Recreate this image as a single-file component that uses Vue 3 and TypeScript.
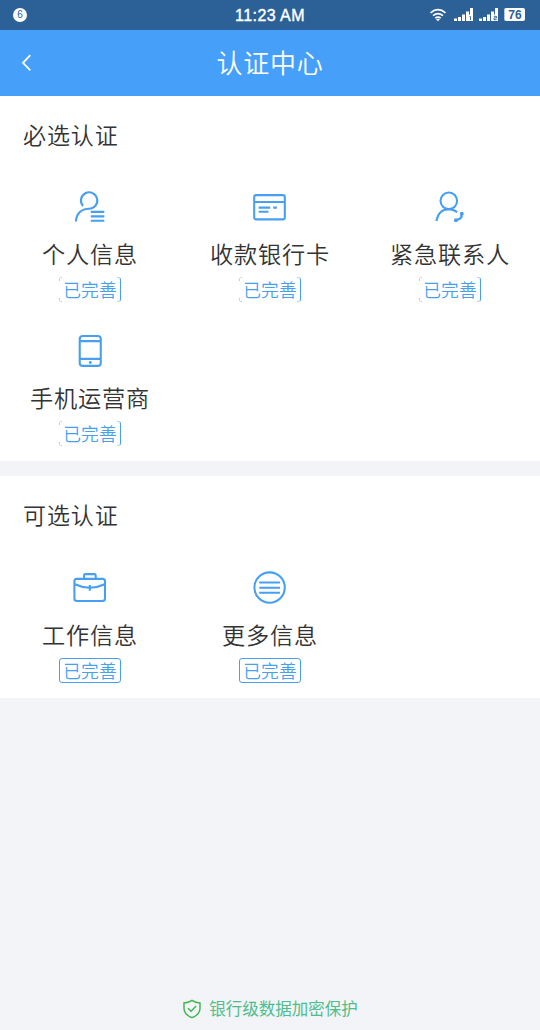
<script setup lang="ts">

interface Item {
  id: number
  icon: string
  name: string
  status: string
}

const required_items: Item[] = [
  {id: 0, icon: 'person', name: '个人信息', status: '已完善'},
  {id: 1, icon: 'card', name: '收款银行卡', status: '已完善'},
  {id: 2, icon: 'contact', name: '紧急联系人', status: '已完善'},
  {id: 3, icon: 'phone', name: '手机运营商', status: '已完善'},
]

const optional_items: Item[] = [
  {id: 4, icon: 'work', name: '工作信息', status: '已完善'},
  {id: 5, icon: 'more', name: '更多信息', status: '已完善'},
]

const sections = [
  {id: 'required', title: '必选认证', items: required_items},
  {id: 'optional', title: '可选认证', items: optional_items},
]

</script>

<template>
  <div class="page">
    <div class="status_bar">
      <div class="notice">6</div>
      <div class="time">11:23 AM</div>
      <div class="signals">
        <svg class="wifi" width="18" height="14" viewBox="0 0 18 14">
          <path d="M1.5 4.8Q9 -1.4 16.5 4.8M4 7.6Q9 3.5 14 7.6M6.3 10.2Q9 8 11.7 10.2" />
          <path class="solid" d="M9 13.2L7 11.3Q9 10 11 11.3Z" />
        </svg>
        <svg v-for="n in 2" :key="n" class="bars" width="19" height="13" viewBox="0 0 19 13">
          <path d="M0 10.5h3V13H0zM4 9h3v4H4zM8 6.5h3V13H8zM12 3.5h3V13h-3zM16 0h3v13h-3z" />
          <rect class="sim_back" x="13.5" y="6.5" width="5.5" height="6.5" />
          <path v-if="n == 1" class="sim" d="M15.5 8.5h1v3.5" />
          <path v-else class="sim" d="M14.8 8.3h2.7v1.6h-2.5v1.8h2.8" />
        </svg>
        <div class="battery">76</div>
      </div>
    </div>

    <div class="header">
      <svg class="back" width="12" height="18" viewBox="0 0 12 18">
        <path d="M10.3 1.2L3 8.8l7.3 7.6" />
      </svg>
      <h1>认证中心</h1>
    </div>

    <div v-for="section of sections" :key="section.id" class="section" :class="section.id">
      <h2>{{ section.title }}</h2>
      <div class="items">
        <div v-for="item of section.items" :key="item.id" class="item">
          <svg class="icon" width="36" height="36" viewBox="0 0 36 36">
            <template v-if="item.icon == 'person'">
              <path d="M10.9 17.2A8.3 8.3 0 1 1 17 20C9.2 20 4 25.3 3.8 33" />
              <path d="M18.8 23.2h13.7M18.8 27.7h13.7M18.8 32.2h13.7" />
            </template>
            <template v-else-if="item.icon == 'card'">
              <rect x="2" y="6.2" width="31" height="24.6" rx="2" />
              <path d="M2 13.2h31M6.5 18.9h11.7M21.3 18.9h3.7M6.5 23.1h10" />
            </template>
            <template v-else-if="item.icon == 'contact'">
              <circle cx="16.8" cy="12" r="8.4" />
              <path d="M4.2 32.4C5.7 24.4 10 20.5 16.6 20.5Q21.7 20.5 25.3 23.5" />
              <path class="handset" d="M29.7 25Q30.8 30.6 24 31.6" />
              <circle class="dot" cx="30" cy="25" r="2" />
              <circle class="dot" cx="24" cy="31.6" r="2" />
            </template>
            <template v-else-if="item.icon == 'phone'">
              <rect x="7.6" y="3" width="21.3" height="30.3" rx="3" />
              <path d="M7.6 8.2h21.3M7.6 26.2h21.3" />
              <circle class="dot" cx="18.3" cy="29.9" r="1.5" />
            </template>
            <template v-else-if="item.icon == 'work'">
              <rect x="2.2" y="9" width="31" height="22.4" rx="2.5" />
              <path d="M12 8.7V5.6Q12 4.2 13.4 4.2H22.4Q23.8 4.2 23.8 5.6V8.7" />
              <path d="M2.5 14.5Q18 21.5 33 14.5M17.8 15.3v5.6" />
            </template>
            <template v-else>
              <circle cx="17.6" cy="17.8" r="15.4" />
              <path d="M7.1 12.7h21M7.1 17.9h21M7.1 23.1h21" />
            </template>
          </svg>
          <div class="name">{{ item.name }}</div>
          <div class="badge">{{ item.status }}</div>
        </div>
      </div>
    </div>

    <div class="footer">
      <svg width="20" height="20" viewBox="0 0 20 20">
        <path d="M10 1.3Q13.5 3.7 18 4V9.5Q18 15.6 10 18.7Q2 15.6 2 9.5V4Q6.5 3.7 10 1.3Z" />
        <path d="M6 9.2l3.1 3 5-5.2" />
      </svg>
      <span>银行级数据加密保护</span>
    </div>
  </div>
</template>

<style>
body {
  margin: 0;
  background-color: #f2f4f8;
}
</style>

<style scoped>
.page {
  width: 540px;
  height: 1030px;
  display: flex;
  flex-direction: column;
  background-color: #f2f4f8;
  font-family: "Noto Sans CJK SC", sans-serif;
  overflow: hidden;
}

svg {
  display: block;
  fill: none;
}

.status_bar {
  height: 30px;
  flex: none;
  display: grid;
  grid-template-columns: 1fr auto 1fr;
  align-items: center;
  background-color: #2b6197;
  color: white;
  font-family: "Liberation Sans", sans-serif;
}

.notice {
  width: 14px;
  height: 14px;
  margin-left: 13px;
  border-radius: 50%;
  background-color: white;
  color: #2b6197;
  font-size: 10px;
  line-height: 14px;
  text-align: center;
}

.time {
  padding-top: 2px;
  font-size: 16px;
  letter-spacing: 0.45px;
  line-height: 28px;
  -webkit-text-stroke: 0.4px white;
}

.signals {
  display: flex;
  justify-content: flex-end;
  align-items: center;
  gap: 6px;
  padding-right: 15px;
}

.wifi {
  margin-right: 1px;
  stroke: white;
  stroke-width: 1.7;
}

.solid {
  fill: white;
  stroke: none;
}

.bars {
  margin-bottom: 2px;
  fill: white;
}

.sim_back {
  fill: white;
}

.sim {
  fill: none;
  stroke: #2b6197;
  stroke-width: 0.9;
}

.battery {
  width: 20px;
  height: 13px;
  margin-bottom: 1px;
  border-left: 1px solid #b5c9dc;
  border-radius: 2px;
  background-color: white;
  color: #2b6197;
  font-size: 12px;
  font-weight: bold;
  line-height: 14px;
  text-align: center;
}

.header {
  height: 66px;
  flex: none;
  display: grid;
  grid-template-columns: 60px 1fr 60px;
  align-items: center;
  background-color: #469ff8;
  color: white;
}

.back {
  margin-left: 20px;
  stroke: white;
  stroke-width: 1.8;
}

h1 {
  margin: 0;
  font-size: 26px;
  font-weight: 350;
  letter-spacing: 0.8px;
  line-height: 64px;
  height: 66px;
  text-align: center;
}

.section {
  flex: none;
  padding-bottom: 15px;
  background-color: white;
}

.optional {
  margin-top: 15px;
}

h2 {
  height: 77px;
  margin: 0 0 16px 23px;
  color: #333;
  font-size: 23px;
  font-weight: 350;
  letter-spacing: 0.9px;
  line-height: 76px;
}

.optional h2 {
  margin-bottom: 17px;
}

.items {
  display: grid;
  grid-template-columns: repeat(3, 180px);
  row-gap: 31px;
}

.item {
  height: 113px;
  display: flex;
  flex-direction: column;
  align-items: center;
}

.icon {
  stroke: #469ff0;
  stroke-width: 2.1;
}

.handset {
  stroke-width: 2.4;
}

.dot {
  fill: #469ff0;
  stroke: none;
}

.name {
  height: 40px;
  margin: 9px 0 4px;
  color: #333;
  font-size: 23.2px;
  font-weight: 350;
  letter-spacing: 0.8px;
  line-height: 39px;
  white-space: nowrap;
}

.badge {
  box-sizing: border-box;
  width: 62px;
  height: 25px;
  border: 1px solid #469ff0;
  border-radius: 3px;
  color: #469ff0;
  font-size: 17.8px;
  font-weight: 350;
  line-height: 23px;
  text-align: center;
  white-space: nowrap;
}

/* only the corners and the right edge stay visible */
.required .badge {
  border-color: transparent #469ff0 transparent transparent;
  background:
    linear-gradient(#a9d2f8, #a9d2f8) 0 0 / 3px 1px no-repeat border-box,
    linear-gradient(#a9d2f8, #a9d2f8) 0 0 / 1px 4px no-repeat border-box,
    linear-gradient(#a9d2f8, #a9d2f8) 0 100% / 3px 1px no-repeat border-box,
    linear-gradient(#a9d2f8, #a9d2f8) 0 100% / 1px 4px no-repeat border-box,
    linear-gradient(#a9d2f8, #a9d2f8) 100% 0 / 4px 1px no-repeat border-box,
    linear-gradient(#a9d2f8, #a9d2f8) 100% 100% / 4px 1px no-repeat border-box;
}

.footer {
  margin-top: auto;
  height: 42px;
  display: flex;
  justify-content: center;
  align-items: center;
  gap: 7px;
  color: #4fbd8b;
  font-size: 16.5px;
}

.footer svg {
  stroke: #3cb54a;
  stroke-width: 1.4;
}

.footer span {
  margin-bottom: 2px;
}
</style>
